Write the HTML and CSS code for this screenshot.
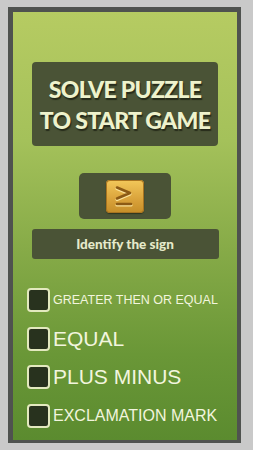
FILE: index.html
```html
<!DOCTYPE html>
<html lang="en">
<head>
  <meta charset="UTF-8" />
  <title>Puzzle Lock</title>
  <link rel="stylesheet" href="styles.css">
</head>
<body>

  <div class="frame">
    <div class="screen">

      <div class="title-box">
        <p>SOLVE PUZZLE</p>
        <p>TO START GAME</p>
      </div>

      <div class="sign-box">
        <div class="sign-tile">
          <svg width="38" height="33" viewBox="0 0 38 33">
            <g fill="none" stroke-linecap="round" stroke-linejoin="round">
              <polyline points="11,7.5 24,13 11,18.5" stroke="#fbe39a" stroke-width="3.2" transform="translate(0,1)" />
              <line x1="11" y1="24" x2="25" y2="24" stroke="#fbe39a" stroke-width="3.2" transform="translate(0,1)" />
              <polyline points="11,7.5 24,13 11,18.5" stroke="#8c5a14" stroke-width="2.6" />
              <line x1="11" y1="24" x2="25" y2="24" stroke="#8c5a14" stroke-width="2.6" />
            </g>
          </svg>
        </div>
      </div>

      <div class="hint-box">Identify the sign</div>

      <ul class="options">
        <li class="option"><span class="box"></span><span class="label small">GREATER THEN OR EQUAL</span></li>
        <li class="option"><span class="box"></span><span class="label big">EQUAL</span></li>
        <li class="option"><span class="box"></span><span class="label big">PLUS MINUS</span></li>
        <li class="option"><span class="box"></span><span class="label mid">EXCLAMATION MARK</span></li>
      </ul>

    </div>
  </div>

</body>
</html>
```

FILE: styles.css
```css
body {
  margin: 0;
  background-color: #c9c9c9;
  font-family: "Liberation Sans", Arial, sans-serif;
}

.frame {
  margin: 7px 0 0 8px;
  width: 224px;
  height: 428px;
  border-style: solid;
  border-color: #4f524f;
  border-width: 5px 4px 3px 5px;
}

.screen {
  height: 100%;
  display: flex;
  flex-direction: column;
  align-items: center;
  background: linear-gradient(#b6cb62 0%, #a4c15a 30%, #87ab48 55%, #6a9737 80%, #5b8b2f 100%);
}

.title-box {
  margin-top: 50px;
  width: 186px;
  height: 84px;
  border-radius: 4px;
  background-color: #4a5336;
  display: flex;
  flex-direction: column;
  justify-content: center;
  align-items: center;
  gap: 7px;
}

.title-box p {
  margin: 0;
  font-family: Lato, "Open Sans", sans-serif;
  font-weight: 900;
  font-size: 23px;
  line-height: 24px;
  letter-spacing: -0.7px;
  color: #eef2cc;
  text-shadow: 1px 2px 1px #262b1a;
}

.sign-box {
  margin-top: 27px;
  width: 92px;
  height: 46px;
  border-radius: 5px;
  background-color: #4a5336;
  display: flex;
  justify-content: center;
  align-items: center;
}

.sign-tile {
  width: 38px;
  height: 33px;
  border-radius: 4px;
  background: linear-gradient(#f3c85a, #d9a23a 60%, #c58d28);
  box-shadow: inset 0 0 0 1px #a87420, 0 1px 1px #30361f;
}

.sign-tile svg {
  display: block;
}

.hint-box {
  margin-top: 10px;
  width: 187px;
  height: 30px;
  border-radius: 3px;
  background-color: #4a5336;
  color: #e6eacb;
  font-family: Lato, "Open Sans", sans-serif;
  font-weight: 900;
  font-size: 13.5px;
  display: flex;
  justify-content: center;
  align-items: center;
}

.options {
  list-style: none;
  margin: 29px 0 0 0;
  padding: 0 0 0 14px;
  align-self: stretch;
  display: flex;
  flex-direction: column;
  gap: 14.5px;
}

.option {
  display: flex;
  align-items: center;
  height: 24px;
}

.box {
  box-sizing: border-box;
  width: 23px;
  height: 24px;
  border: 2px solid #e3e9bf;
  border-radius: 4px;
  background-color: #28321e;
  flex-shrink: 0;
}

.label {
  margin-left: 3px;
  color: #f2f5de;
  white-space: nowrap;
}

.small {
  font-size: 12.5px;
}

.mid {
  font-size: 16px;
}

.big {
  font-size: 21px;
}
```
